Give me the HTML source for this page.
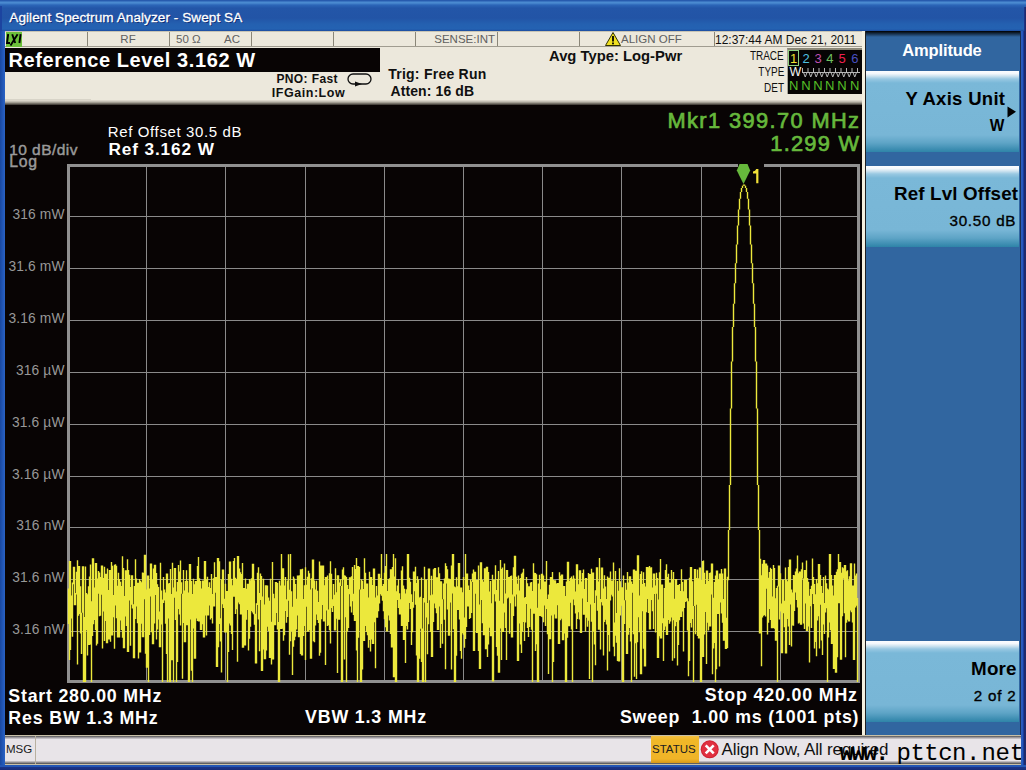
<!DOCTYPE html>
<html><head><meta charset="utf-8"><style>
html,body{margin:0;padding:0;}
body{width:1026px;height:770px;overflow:hidden;position:relative;background:#2358b0;font-family:"Liberation Sans",sans-serif;}
</style></head><body>
<div style="position:absolute;left:0;top:0;width:1026px;height:31px;background:linear-gradient(#2457aa 0px,#2a5fb2 1px,#4a8ad0 2px,#4a8ad0 3px,#2c66b8 5px,#2356a8 8px,#2254a6 18px,#2460b0 24px,#2462b2 29px,#1c4ca0 31px);"></div><div style='position:absolute;top:11.28px;font-size:13.6px;line-height:13.6px;font-weight:normal;color:#fff;white-space:pre;font-family:"Liberation Sans", sans-serif;letter-spacing:0.05px;left:9.3px;text-shadow:1px 1px 0 #0a2a70;-webkit-text-stroke:0.3px #fff;'>Agilent Spectrum Analyzer - Swept SA</div>
<div style="position:absolute;left:1023.5px;top:7px;width:2.5px;height:24px;background:linear-gradient(90deg,#1c3ca0,#1f2a6c 1px);"></div><div style="position:absolute;left:0;top:6px;width:2px;height:25px;background:#1c44a0;"></div><div style="position:absolute;left:0;top:31px;width:5px;height:739px;background:linear-gradient(90deg,#1a48a0,#2258b8 3px,#2a62c4 5px);"></div><div style="position:absolute;left:1021px;top:31px;width:5px;height:739px;background:linear-gradient(90deg,#2a5cc0 0px,#2656b8 2px,#183c9c 2px,#183c9c 3px,#1f2a6c 3.3px,#1f2a6c 5px);"></div><div style="position:absolute;left:0;top:765px;width:1026px;height:5px;background:linear-gradient(#2456b4 0px,#2456b4 2px,#1a3488 2.5px,#182c78 5px);"></div><div style="position:absolute;left:5px;top:31px;width:860px;height:74px;background:#ece8dc;"></div><div style="position:absolute;left:5px;top:31px;width:857px;height:1px;background:#c8c4b4;"></div><div style="position:absolute;left:5px;top:46px;width:857px;height:1px;background:#a09c90;"></div><div style="position:absolute;left:87px;top:32px;width:1px;height:14px;background:#8a8678;"></div><div style="position:absolute;left:169px;top:32px;width:1px;height:14px;background:#8a8678;"></div><div style="position:absolute;left:251px;top:32px;width:1px;height:14px;background:#8a8678;"></div><div style="position:absolute;left:333px;top:32px;width:1px;height:14px;background:#8a8678;"></div><div style="position:absolute;left:415px;top:32px;width:1px;height:14px;background:#8a8678;"></div><div style="position:absolute;left:497px;top:32px;width:1px;height:14px;background:#8a8678;"></div><div style="position:absolute;left:579px;top:32px;width:1px;height:14px;background:#8a8678;"></div><div style="position:absolute;left:714px;top:32px;width:1px;height:14px;background:#8a8678;"></div><div style="position:absolute;left:6px;top:32px;width:16px;height:15px;background:#6cc03a;"></div><svg style="position:absolute;left:0;top:0" width="30" height="50"><path d="M8.2 34 L7 43 H10 M12.2 34.2 L15.2 43 M17.6 34.2 L10.5 45.4 M20.6 34.2 L19.4 43" fill="none" stroke="#000" stroke-width="1.9"/></svg><div style='position:absolute;top:33.76px;font-size:11.5px;line-height:11.5px;font-weight:normal;color:#606060;white-space:pre;font-family:"Liberation Sans", sans-serif;left:-72px;width:400px;text-align:center;'>RF</div>
<div style='position:absolute;top:33.76px;font-size:11.5px;line-height:11.5px;font-weight:normal;color:#606060;white-space:pre;font-family:"Liberation Sans", sans-serif;left:176px;'>50 Ω</div>
<div style='position:absolute;top:33.76px;font-size:11.5px;line-height:11.5px;font-weight:normal;color:#606060;white-space:pre;font-family:"Liberation Sans", sans-serif;left:224px;'>AC</div>
<div style='position:absolute;top:33.76px;font-size:11.5px;line-height:11.5px;font-weight:normal;color:#606060;white-space:pre;font-family:"Liberation Sans", sans-serif;right:531.00px;'>SENSE:INT</div>
<svg style="position:absolute;left:605px;top:32px" width="16" height="14" viewBox="0 0 16 14"><path d="M8 0.5 L15.5 13.5 L0.5 13.5 Z" fill="#f0e020" stroke="#303000" stroke-width="1"/><rect x="7.1" y="4" width="1.8" height="5.5" fill="#000"/><rect x="7.1" y="10.5" width="1.8" height="1.8" fill="#000"/></svg><div style='position:absolute;top:33.76px;font-size:11.5px;line-height:11.5px;font-weight:normal;color:#606060;white-space:pre;font-family:"Liberation Sans", sans-serif;left:621px;'>ALIGN OFF</div>
<div style='position:absolute;top:33.84px;font-size:12px;line-height:12px;font-weight:normal;color:#101010;white-space:pre;font-family:"Liberation Sans", sans-serif;left:715px;'>12:37:44 AM Dec 21, 2011</div>
<div style="position:absolute;left:5px;top:48px;width:375px;height:23.6px;background:#080404;"></div><div style='position:absolute;top:50.07px;font-size:20px;line-height:20px;font-weight:bold;color:#fff;white-space:pre;font-family:"Liberation Sans", sans-serif;letter-spacing:0.6px;left:8.5px;'>Reference Level 3.162 W</div>
<div style='position:absolute;top:73.24px;font-size:12px;line-height:12px;font-weight:bold;color:#101010;white-space:pre;font-family:"Liberation Sans", sans-serif;letter-spacing:0.4px;left:276.4px;'>PNO: Fast</div>
<div style='position:absolute;top:87.42px;font-size:12.5px;line-height:12.5px;font-weight:bold;color:#101010;white-space:pre;font-family:"Liberation Sans", sans-serif;letter-spacing:0.55px;left:271.7px;'>IFGain:Low</div>
<svg style="position:absolute;left:347px;top:73px" width="26" height="14" viewBox="0 0 26 14"><rect x="1" y="1" width="23" height="10" rx="5" ry="5" fill="none" stroke="#101010" stroke-width="1.3"/><path d="M8 8.5 L15 11 L8 13.5 Z" fill="#101010"/></svg><div style='position:absolute;top:66.85px;font-size:14px;line-height:14px;font-weight:bold;color:#101010;white-space:pre;font-family:"Liberation Sans", sans-serif;letter-spacing:0.25px;left:388.2px;'>Trig: Free Run</div>
<div style='position:absolute;top:84.45px;font-size:14px;line-height:14px;font-weight:bold;color:#101010;white-space:pre;font-family:"Liberation Sans", sans-serif;letter-spacing:0.1px;left:390.5px;'>Atten: 16 dB</div>
<div style='position:absolute;top:49.27px;font-size:14.8px;line-height:14.8px;font-weight:bold;color:#101010;white-space:pre;font-family:"Liberation Sans", sans-serif;left:549px;'>Avg Type: Log-Pwr</div>
<div style='position:absolute;top:50.34px;font-size:12px;line-height:12px;font-weight:normal;color:#101010;white-space:pre;font-family:"Liberation Sans", sans-serif;right:242.00px;transform:scaleX(0.83);transform-origin:100% 50%;'>TRACE</div>
<div style='position:absolute;top:66.04px;font-size:12px;line-height:12px;font-weight:normal;color:#101010;white-space:pre;font-family:"Liberation Sans", sans-serif;right:242.00px;transform:scaleX(0.83);transform-origin:100% 50%;'>TYPE</div>
<div style='position:absolute;top:81.54px;font-size:12px;line-height:12px;font-weight:normal;color:#101010;white-space:pre;font-family:"Liberation Sans", sans-serif;right:242.00px;transform:scaleX(0.83);transform-origin:100% 50%;'>DET</div>
<div style="position:absolute;left:787px;top:47.5px;width:75px;height:46.5px;background:#060404;border-top:2.5px solid #8c8878;border-left:1.5px solid #a8a498;box-sizing:border-box;"></div><div style='position:absolute;top:51.99px;font-size:13px;line-height:13px;font-weight:normal;color:#f0e030;white-space:pre;font-family:"Liberation Sans", sans-serif;left:593.6px;width:400px;text-align:center;'>1</div>
<div style='position:absolute;top:51.99px;font-size:13px;line-height:13px;font-weight:normal;color:#50c0e0;white-space:pre;font-family:"Liberation Sans", sans-serif;left:606px;width:400px;text-align:center;'>2</div>
<div style='position:absolute;top:51.99px;font-size:13px;line-height:13px;font-weight:normal;color:#c050b0;white-space:pre;font-family:"Liberation Sans", sans-serif;left:618px;width:400px;text-align:center;'>3</div>
<div style='position:absolute;top:51.99px;font-size:13px;line-height:13px;font-weight:normal;color:#70c060;white-space:pre;font-family:"Liberation Sans", sans-serif;left:629.8px;width:400px;text-align:center;'>4</div>
<div style='position:absolute;top:51.99px;font-size:13px;line-height:13px;font-weight:normal;color:#f02050;white-space:pre;font-family:"Liberation Sans", sans-serif;left:642px;width:400px;text-align:center;'>5</div>
<div style='position:absolute;top:51.99px;font-size:13px;line-height:13px;font-weight:normal;color:#4850c0;white-space:pre;font-family:"Liberation Sans", sans-serif;left:654.8px;width:400px;text-align:center;'>6</div>
<div style="position:absolute;left:788px;top:50px;width:11px;height:16px;border:1px solid #90d080;box-sizing:border-box;"></div><div style='position:absolute;top:66.42px;font-size:12.5px;line-height:12.5px;font-weight:normal;color:#f4f4f4;white-space:pre;font-family:"Liberation Sans", sans-serif;left:789.5px;'>W</div>
<svg style="position:absolute;left:0;top:0" width="1026" height="100"><path d="M802 72.5 H860 M802.5 72.5 V68 M803.5 72.5 L805.25 77 L807.0 72.5 M808.0 72.5 V68 M809.0 72.5 L810.75 77 L812.5 72.5 M813.5 72.5 V68 M814.5 72.5 L816.25 77 L818.0 72.5 M819.0 72.5 V68 M820.0 72.5 L821.75 77 L823.5 72.5 M824.5 72.5 V68 M825.5 72.5 L827.25 77 L829.0 72.5 M830.0 72.5 V68 M831.0 72.5 L832.75 77 L834.5 72.5 M835.5 72.5 V68 M836.5 72.5 L838.25 77 L840.0 72.5 M841.0 72.5 V68 M842.0 72.5 L843.75 77 L845.5 72.5 M846.5 72.5 V68 M847.5 72.5 L849.25 77 L851.0 72.5 M852.0 72.5 V68 M853.0 72.5 L854.75 77 L856.5 72.5 M857.5 72.5 V68" fill="none" stroke="#b8b8b8" stroke-width="1"/></svg><div style='position:absolute;top:79.29px;font-size:13px;line-height:13px;font-weight:normal;color:#58c028;white-space:pre;font-family:"Liberation Sans", sans-serif;left:593.6px;width:400px;text-align:center;'>N</div>
<div style='position:absolute;top:79.29px;font-size:13px;line-height:13px;font-weight:normal;color:#58c028;white-space:pre;font-family:"Liberation Sans", sans-serif;left:606px;width:400px;text-align:center;'>N</div>
<div style='position:absolute;top:79.29px;font-size:13px;line-height:13px;font-weight:normal;color:#58c028;white-space:pre;font-family:"Liberation Sans", sans-serif;left:618px;width:400px;text-align:center;'>N</div>
<div style='position:absolute;top:79.29px;font-size:13px;line-height:13px;font-weight:normal;color:#58c028;white-space:pre;font-family:"Liberation Sans", sans-serif;left:629.8px;width:400px;text-align:center;'>N</div>
<div style='position:absolute;top:79.29px;font-size:13px;line-height:13px;font-weight:normal;color:#58c028;white-space:pre;font-family:"Liberation Sans", sans-serif;left:642px;width:400px;text-align:center;'>N</div>
<div style='position:absolute;top:79.29px;font-size:13px;line-height:13px;font-weight:normal;color:#58c028;white-space:pre;font-family:"Liberation Sans", sans-serif;left:654.8px;width:400px;text-align:center;'>N</div>
<div style="position:absolute;left:5px;top:99px;width:86px;height:3px;background:#d8d4c8;"></div><div style="position:absolute;left:5px;top:100px;width:857px;height:6px;background:linear-gradient(#e4e0d4,#b8b4a8 2px,#605c54 4px,#080404 6px);"></div><div style="position:absolute;left:5px;top:105px;width:857px;height:630px;background:#080404;"></div><div style="position:absolute;left:862px;top:31px;width:3px;height:704px;background:#f4f0e0;"></div><div style="position:absolute;left:865px;top:31px;width:1px;height:704px;background:#202020;"></div><div style='position:absolute;top:123.90px;font-size:15px;line-height:15px;font-weight:normal;color:#fff;white-space:pre;font-family:"Liberation Sans", sans-serif;letter-spacing:0.62px;left:107.8px;'>Ref Offset 30.5 dB</div>
<div style='position:absolute;top:140.64px;font-size:17.2px;line-height:17.2px;font-weight:bold;color:#fff;white-space:pre;font-family:"Liberation Sans", sans-serif;letter-spacing:0.9px;left:108.4px;'>Ref 3.162 W</div>
<div style='position:absolute;top:142.28px;font-size:15.5px;line-height:15.5px;font-weight:normal;color:#9a9a9a;white-space:pre;font-family:"Liberation Sans", sans-serif;letter-spacing:0.45px;left:9.2px;-webkit-text-stroke:0.45px #9a9a9a;'>10 dB/div</div>
<div style='position:absolute;top:154.22px;font-size:15.8px;line-height:15.8px;font-weight:normal;color:#9a9a9a;white-space:pre;font-family:"Liberation Sans", sans-serif;letter-spacing:0.8px;left:9.2px;-webkit-text-stroke:0.45px #9a9a9a;'>Log</div>
<div style='position:absolute;top:110.04px;font-size:21.8px;line-height:21.8px;font-weight:normal;color:#66b83c;white-space:pre;font-family:"Liberation Sans", sans-serif;letter-spacing:1.4px;right:165.60px;-webkit-text-stroke:0.7px #66b83c;'>Mkr1 399.70 MHz</div>
<div style='position:absolute;top:132.54px;font-size:21.8px;line-height:21.8px;font-weight:normal;color:#66b83c;white-space:pre;font-family:"Liberation Sans", sans-serif;letter-spacing:1.25px;right:165.75px;-webkit-text-stroke:0.7px #66b83c;'>1.299 W</div>
<svg style="position:absolute;left:0;top:0" width="1026" height="770"><line x1="146.5" y1="167" x2="146.5" y2="680" stroke="#8a8a8a" stroke-width="1"/><line x1="225.5" y1="167" x2="225.5" y2="680" stroke="#8a8a8a" stroke-width="1"/><line x1="305.5" y1="167" x2="305.5" y2="680" stroke="#8a8a8a" stroke-width="1"/><line x1="384.5" y1="167" x2="384.5" y2="680" stroke="#8a8a8a" stroke-width="1"/><line x1="463.5" y1="167" x2="463.5" y2="680" stroke="#8a8a8a" stroke-width="1"/><line x1="542.5" y1="167" x2="542.5" y2="680" stroke="#8a8a8a" stroke-width="1"/><line x1="621.5" y1="167" x2="621.5" y2="680" stroke="#8a8a8a" stroke-width="1"/><line x1="701.5" y1="167" x2="701.5" y2="680" stroke="#8a8a8a" stroke-width="1"/><line x1="780.5" y1="167" x2="780.5" y2="680" stroke="#8a8a8a" stroke-width="1"/><line x1="70" y1="216.5" x2="857" y2="216.5" stroke="#8a8a8a" stroke-width="1"/><line x1="70" y1="268.5" x2="857" y2="268.5" stroke="#8a8a8a" stroke-width="1"/><line x1="70" y1="320.5" x2="857" y2="320.5" stroke="#8a8a8a" stroke-width="1"/><line x1="70" y1="372.5" x2="857" y2="372.5" stroke="#8a8a8a" stroke-width="1"/><line x1="70" y1="424.5" x2="857" y2="424.5" stroke="#8a8a8a" stroke-width="1"/><line x1="70" y1="476.5" x2="857" y2="476.5" stroke="#8a8a8a" stroke-width="1"/><line x1="70" y1="527.5" x2="857" y2="527.5" stroke="#8a8a8a" stroke-width="1"/><line x1="70" y1="579.5" x2="857" y2="579.5" stroke="#8a8a8a" stroke-width="1"/><line x1="70" y1="631.5" x2="857" y2="631.5" stroke="#8a8a8a" stroke-width="1"/><path d="M68.5 165.5 H738 M764 165.5 H858.5 V681.5 H68.5 V164" fill="none" stroke="#909090" stroke-width="3"/><path d="M68.5 588.4V624.0M69.5 561.1V660.1M70.5 561.1V650.1M71.5 595.6V618.6M72.5 582.4V636.8M73.5 566.8V584.2M74.5 566.8V605.3M75.5 593.0V605.3M76.5 571.8V594.4M77.5 560.2V664.6M78.5 565.9V615.8M79.5 565.9V614.1M80.5 586.2V633.6M81.5 612.7V654.1M82.5 566.2V612.7M83.5 566.2V682.0M84.5 617.0V682.0M85.5 566.6V682.0M86.5 593.1V630.3M87.5 594.2V655.5M88.5 586.3V645.1M89.5 576.4V645.1M90.5 564.6V644.4M91.5 601.3V682.0M92.5 558.3V636.1M93.5 558.3V624.2M94.5 587.5V619.9M95.5 563.1V630.0M96.5 563.1V645.6M97.5 578.5V643.8M98.5 571.0V593.8M99.5 572.6V616.2M100.5 577.1V615.8M101.5 565.6V594.7M102.5 565.6V648.6M103.5 577.9V611.5M104.5 566.8V641.1M105.5 573.7V620.9M106.5 573.8V643.2M107.5 568.4V643.2M108.5 589.9V639.6M109.5 569.9V639.6M110.5 569.9V641.8M111.5 562.0V635.6M112.5 565.8V635.6M113.5 595.1V617.3M114.5 564.7V648.8M115.5 564.3V605.6M116.5 565.7V618.3M117.5 585.8V637.4M118.5 572.7V637.6M119.5 578.9V637.6M120.5 581.8V620.6M121.5 585.9V629.9M122.5 556.2V637.7M123.5 568.1V648.2M124.5 595.9V648.2M125.5 570.2V616.4M126.5 570.2V625.9M127.5 559.3V652.0M128.5 569.9V652.0M129.5 574.7V600.4M130.5 587.0V645.8M131.5 575.3V604.8M132.5 575.3V608.6M133.5 604.3V658.2M134.5 585.9V658.2M135.5 559.3V619.0M136.5 578.4V606.5M137.5 582.8V623.2M138.5 582.8V658.6M139.5 579.1V652.5M140.5 580.8V652.5M141.5 582.3V623.7M142.5 572.6V637.3M143.5 572.7V637.3M144.5 554.8V599.3M145.5 554.8V653.7M146.5 589.4V667.8M147.5 575.4V667.8M148.5 575.4V682.0M149.5 588.6V635.1M150.5 563.6V596.4M151.5 563.6V632.3M152.5 579.6V644.2M153.5 568.4V644.2M154.5 564.8V623.4M155.5 564.8V595.0M156.5 572.9V639.5M157.5 584.2V629.4M158.5 586.9V619.5M159.5 611.4V647.2M160.5 562.7V647.2M161.5 590.5V624.5M162.5 599.4V682.0M163.5 577.1V603.1M164.5 589.5V600.4M165.5 592.6V623.7M166.5 573.5V653.9M167.5 573.5V682.0M168.5 583.6V618.4M169.5 583.0V682.0M170.5 569.1V682.0M171.5 593.9V660.2M172.5 562.8V660.2M173.5 587.6V682.0M174.5 567.9V597.8M175.5 567.9V620.0M176.5 591.5V682.0M177.5 581.9V661.9M178.5 564.9V608.9M179.5 571.4V614.6M180.5 560.4V625.6M181.5 582.3V593.8M182.5 593.8V678.7M183.5 570.1V623.0M184.5 590.6V642.2M185.5 581.0V642.2M186.5 570.3V625.3M187.5 580.8V625.3M188.5 592.6V682.0M189.5 564.0V682.0M190.5 564.0V619.5M191.5 581.0V670.8M192.5 594.1V682.0M193.5 578.8V628.4M194.5 584.2V658.7M195.5 581.1V658.7M196.5 580.9V618.4M197.5 565.9V621.0M198.5 556.9V621.4M199.5 578.2V621.4M200.5 581.0V630.1M201.5 588.5V630.1M202.5 580.5V624.3M203.5 580.5V637.4M204.5 560.9V637.4M205.5 560.9V615.4M206.5 579.5V635.5M207.5 576.7V615.5M208.5 587.0V615.5M209.5 582.3V605.4M210.5 588.0V619.4M211.5 574.1V618.1M212.5 594.0V623.6M213.5 578.2V606.6M214.5 562.3V606.6M215.5 577.1V592.7M216.5 577.1V667.1M217.5 557.9V667.1M218.5 557.9V647.2M219.5 561.2V624.1M220.5 618.3V641.5M221.5 579.4V672.6M222.5 569.6V604.2M223.5 569.6V607.9M224.5 598.8V632.6M225.5 583.7V632.5M226.5 590.9V632.5M227.5 590.9V682.0M228.5 573.9V652.0M229.5 561.6V623.4M230.5 561.6V625.5M231.5 578.7V634.0M232.5 585.2V650.1M233.5 561.1V596.8M234.5 558.0V596.8M235.5 577.8V614.0M236.5 579.0V609.3M237.5 556.0V661.8M238.5 556.0V602.4M239.5 568.6V604.2M240.5 572.3V614.6M241.5 574.0V614.6M242.5 562.9V647.7M243.5 588.0V647.7M244.5 588.0V645.4M245.5 578.4V645.4M246.5 588.7V619.8M247.5 583.7V610.1M248.5 583.7V650.4M249.5 579.1V638.8M250.5 580.2V626.7M251.5 578.2V611.1M252.5 563.7V612.4M253.5 563.7V614.2M254.5 580.2V624.7M255.5 613.8V663.6M256.5 603.3V663.6M257.5 572.8V605.1M258.5 567.3V619.4M259.5 593.1V651.3M260.5 573.6V599.9M261.5 575.9V670.9M262.5 596.6V670.9M263.5 578.7V649.5M264.5 604.6V659.2M265.5 585.2V659.2M266.5 585.2V650.4M267.5 585.5V626.7M268.5 597.6V631.0M269.5 600.8V657.9M270.5 578.7V657.9M271.5 621.7V664.6M272.5 562.1V659.6M273.5 593.7V659.6M274.5 598.3V625.3M275.5 582.1V625.3M276.5 582.1V612.9M277.5 583.0V629.6M278.5 622.0V682.0M279.5 580.7V682.0M280.5 585.4V628.9M281.5 554.0V628.9M282.5 568.3V628.8M283.5 568.3V640.8M284.5 585.6V635.2M285.5 577.0V610.9M286.5 599.2V622.7M287.5 580.6V617.0M288.5 554.3V600.7M289.5 589.7V654.7M290.5 554.0V641.3M291.5 591.3V631.4M292.5 606.7V675.1M293.5 576.5V646.7M294.5 578.4V640.2M295.5 583.9V636.8M296.5 598.7V629.6M297.5 575.6V615.4M298.5 575.6V637.2M299.5 575.3V637.2M300.5 569.2V654.1M301.5 569.2V655.5M302.5 568.8V655.5M303.5 598.9V636.0M304.5 585.2V626.0M305.5 567.2V660.0M306.5 584.7V606.8M307.5 576.7V631.7M308.5 570.7V631.7M309.5 573.2V630.2M310.5 589.6V658.7M311.5 578.3V658.7M312.5 559.6V588.2M313.5 559.6V641.2M314.5 580.4V642.3M315.5 589.6V625.6M316.5 580.8V614.5M317.5 590.7V620.0M318.5 602.0V623.0M319.5 561.6V655.7M320.5 565.4V652.8M321.5 565.4V619.2M322.5 565.4V605.1M323.5 565.4V621.6M324.5 585.3V621.6M325.5 576.9V664.9M326.5 576.9V610.6M327.5 575.4V625.9M328.5 609.5V625.3M329.5 573.2V630.3M330.5 561.3V643.6M331.5 573.8V607.9M332.5 599.3V612.0M333.5 584.0V606.0M334.5 594.7V630.5M335.5 568.2V630.5M336.5 592.3V618.8M337.5 575.2V673.0M338.5 575.2V619.8M339.5 582.4V619.8M340.5 579.2V586.1M341.5 586.1V682.0M342.5 569.6V682.0M343.5 567.2V579.3M344.5 575.2V659.5M345.5 575.7V617.2M346.5 577.1V682.0M347.5 584.9V631.6M348.5 589.0V628.1M349.5 577.2V594.2M350.5 577.2V606.6M351.5 576.3V612.4M352.5 566.9V601.3M353.5 593.8V615.0M354.5 564.9V620.9M355.5 569.0V620.9M356.5 557.9V650.5M357.5 566.0V682.0M358.5 566.0V637.7M359.5 567.0V589.6M360.5 589.6V682.0M361.5 579.4V682.0M362.5 580.7V669.6M363.5 588.9V640.9M364.5 558.3V640.9M365.5 572.7V626.0M366.5 583.6V631.9M367.5 583.6V635.2M368.5 597.6V647.8M369.5 571.7V639.9M370.5 577.0V651.5M371.5 577.0V639.4M372.5 584.9V643.9M373.5 568.6V643.9M374.5 568.6V622.3M375.5 597.6V668.2M376.5 586.0V617.7M377.5 595.4V617.7M378.5 573.7V611.3M379.5 573.7V603.6M380.5 578.0V594.3M381.5 554.0V595.8M382.5 586.0V600.8M383.5 584.1V611.3M384.5 572.7V619.3M385.5 566.1V627.3M386.5 554.0V631.4M387.5 591.1V631.4M388.5 579.3V615.4M389.5 578.2V620.4M390.5 569.2V634.0M391.5 569.2V647.5M392.5 567.1V647.5M393.5 554.1V677.3M394.5 576.4V677.3M395.5 558.2V682.0M396.5 591.2V682.0M397.5 585.5V599.9M398.5 579.2V608.1M399.5 593.3V614.6M400.5 599.2V614.6M401.5 570.5V626.0M402.5 566.3V626.0M403.5 585.6V639.9M404.5 588.7V639.9M405.5 593.4V662.9M406.5 589.2V625.9M407.5 554.0V629.5M408.5 554.0V622.1M409.5 577.7V602.9M410.5 581.8V608.9M411.5 594.2V645.1M412.5 602.1V632.2M413.5 571.6V607.8M414.5 571.6V591.2M415.5 566.7V604.7M416.5 582.9V655.4M417.5 576.3V682.0M418.5 579.4V682.0M419.5 597.6V658.8M420.5 596.8V628.7M421.5 577.5V661.9M422.5 628.6V682.0M423.5 597.9V682.0M424.5 566.8V602.6M425.5 579.4V682.0M426.5 579.4V617.6M427.5 602.9V654.3M428.5 568.6V624.2M429.5 568.6V600.3M430.5 595.3V631.9M431.5 575.8V657.0M432.5 594.5V657.0M433.5 569.2V621.9M434.5 567.9V603.4M435.5 567.9V608.2M436.5 577.3V613.3M437.5 577.3V629.9M438.5 567.2V629.9M439.5 573.2V606.4M440.5 581.2V648.1M441.5 581.2V624.1M442.5 599.3V643.8M443.5 583.6V599.3M444.5 578.4V619.7M445.5 563.3V669.2M446.5 565.9V583.6M447.5 569.3V609.5M448.5 578.5V635.7M449.5 578.8V635.7M450.5 579.2V602.6M451.5 565.4V669.5M452.5 554.0V593.5M453.5 554.0V629.2M454.5 586.6V682.0M455.5 587.3V682.0M456.5 577.3V655.8M457.5 586.3V610.0M458.5 563.1V610.0M459.5 563.1V619.5M460.5 587.4V651.1M461.5 587.4V658.7M462.5 592.2V633.3M463.5 577.1V634.8M464.5 617.5V647.8M465.5 554.1V639.0M466.5 573.4V627.0M467.5 573.4V606.4M468.5 585.5V606.4M469.5 590.1V618.9M470.5 579.4V618.0M471.5 581.5V613.0M472.5 573.6V582.0M473.5 569.5V650.9M474.5 571.7V650.9M475.5 571.7V593.8M476.5 580.0V633.0M477.5 580.0V632.9M478.5 565.5V651.1M479.5 604.5V669.1M480.5 562.3V669.1M481.5 562.3V599.9M482.5 580.0V623.3M483.5 581.7V635.3M484.5 568.2V635.3M485.5 568.2V649.2M486.5 566.8V649.2M487.5 566.8V657.1M488.5 572.0V644.4M489.5 591.4V627.7M490.5 580.9V636.3M491.5 603.2V636.3M492.5 574.8V681.6M493.5 579.7V681.6M494.5 579.7V594.2M495.5 565.2V601.4M496.5 590.0V647.0M497.5 579.0V655.8M498.5 571.0V672.8M499.5 600.8V672.8M500.5 559.9V628.5M501.5 568.9V660.0M502.5 567.4V632.0M503.5 603.6V632.0M504.5 563.6V612.5M505.5 593.6V628.0M506.5 570.1V660.1M507.5 570.1V598.6M508.5 577.1V597.5M509.5 577.1V633.7M510.5 576.1V603.3M511.5 575.4V637.5M512.5 594.5V637.5M513.5 567.3V615.9M514.5 555.8V596.4M515.5 555.8V606.4M516.5 576.7V594.6M517.5 583.8V661.0M518.5 575.6V661.0M519.5 590.4V623.6M520.5 577.9V644.6M521.5 573.7V653.0M522.5 572.5V631.7M523.5 568.7V622.1M524.5 597.8V640.9M525.5 597.0V622.5M526.5 576.9V603.9M527.5 583.2V628.0M528.5 586.3V637.1M529.5 586.3V626.9M530.5 582.5V608.8M531.5 581.9V629.7M532.5 591.0V682.0M533.5 563.3V613.7M534.5 572.7V613.7M535.5 573.1V651.0M536.5 574.3V644.2M537.5 607.7V682.0M538.5 583.5V682.0M539.5 574.8V615.9M540.5 589.3V615.9M541.5 573.7V616.7M542.5 573.7V617.2M543.5 575.4V622.2M544.5 581.6V605.5M545.5 581.6V626.1M546.5 561.1V608.9M547.5 599.1V634.2M548.5 594.6V674.1M549.5 584.7V639.2M550.5 577.0V639.2M551.5 577.0V615.6M552.5 571.9V682.0M553.5 579.9V661.9M554.5 580.2V614.6M555.5 580.2V618.4M556.5 583.4V618.4M557.5 583.1V605.2M558.5 583.1V643.9M559.5 572.3V643.9M560.5 575.7V620.2M561.5 574.6V618.8M562.5 574.6V640.2M563.5 585.9V640.2M564.5 585.9V633.6M565.5 596.0V682.0M566.5 581.4V682.0M567.5 561.7V637.7M568.5 561.7V626.3M569.5 580.7V626.3M570.5 577.9V602.7M571.5 576.6V629.6M572.5 578.7V682.0M573.5 575.4V599.5M574.5 578.6V605.3M575.5 591.5V613.5M576.5 564.2V629.0M577.5 564.2V619.0M578.5 584.3V612.2M579.5 570.2V619.5M580.5 570.2V633.0M581.5 581.5V633.0M582.5 573.1V598.6M583.5 569.6V614.8M584.5 589.1V614.8M585.5 578.0V631.6M586.5 578.0V617.7M587.5 602.1V626.7M588.5 573.0V620.8M589.5 574.0V678.9M590.5 574.0V604.6M591.5 568.8V621.8M592.5 572.6V682.0M593.5 572.6V631.5M594.5 603.0V644.4M595.5 590.3V665.3M596.5 567.2V595.7M597.5 567.2V610.7M598.5 581.5V629.7M599.5 558.1V629.7M600.5 599.0V649.6M601.5 567.4V602.2M602.5 567.4V605.4M603.5 588.5V655.5M604.5 575.2V622.0M605.5 586.4V619.7M606.5 599.1V624.4M607.5 576.5V670.6M608.5 577.8V635.0M609.5 577.8V651.6M610.5 571.5V600.5M611.5 580.5V594.7M612.5 580.5V596.4M613.5 562.4V646.7M614.5 622.6V656.2M615.5 570.9V635.7M616.5 613.0V642.8M617.5 581.1V661.0M618.5 590.7V661.5M619.5 568.3V661.5M620.5 581.3V615.5M621.5 587.2V605.7M622.5 587.2V682.0M623.5 575.5V682.0M624.5 600.2V624.0M625.5 582.8V600.2M626.5 589.8V653.9M627.5 572.1V653.9M628.5 582.5V634.8M629.5 576.2V627.9M630.5 576.2V641.5M631.5 581.5V682.0M632.5 584.0V592.7M633.5 569.6V634.2M634.5 569.6V676.7M635.5 570.7V643.2M636.5 570.7V678.9M637.5 555.2V642.3M638.5 555.2V617.2M639.5 595.4V632.3M640.5 574.0V674.3M641.5 571.2V674.3M642.5 584.0V611.2M643.5 572.2V648.7M644.5 583.0V666.5M645.5 586.5V666.5M646.5 567.0V612.2M647.5 567.0V599.0M648.5 567.2V612.9M649.5 566.0V629.4M650.5 567.6V629.4M651.5 567.3V600.1M652.5 587.6V611.3M653.5 573.5V628.9M654.5 573.5V593.9M655.5 585.4V632.4M656.5 572.7V593.7M657.5 578.0V657.9M658.5 599.5V657.9M659.5 572.3V636.3M660.5 559.0V638.6M661.5 584.5V638.6M662.5 584.5V623.2M663.5 618.3V661.1M664.5 588.0V629.9M665.5 570.1V626.6M666.5 564.2V635.1M667.5 577.1V635.1M668.5 573.7V620.0M669.5 582.4V623.7M670.5 582.4V621.5M671.5 569.9V617.6M672.5 579.1V660.7M673.5 571.9V620.3M674.5 598.7V658.2M675.5 579.0V626.3M676.5 579.0V621.9M677.5 585.0V665.5M678.5 585.0V644.9M679.5 584.0V620.3M680.5 590.9V617.0M681.5 569.2V617.0M682.5 582.0V611.5M683.5 591.3V651.5M684.5 579.8V608.1M685.5 579.8V601.9M686.5 579.8V601.3M687.5 598.3V630.6M688.5 601.3V676.3M689.5 577.7V661.1M690.5 566.9V622.9M691.5 566.9V627.4M692.5 581.3V618.9M693.5 605.9V682.0M694.5 569.1V605.9M695.5 569.1V634.2M696.5 578.0V604.7M697.5 569.5V636.1M698.5 578.2V638.5M699.5 567.4V638.5M700.5 567.4V682.0M701.5 579.8V682.0M702.5 561.1V656.9M703.5 560.4V656.9M704.5 572.7V634.4M705.5 584.0V611.9M706.5 570.6V664.1M707.5 570.6V622.7M708.5 580.9V630.5M709.5 573.0V626.4M710.5 572.4V626.4M711.5 563.5V594.6M712.5 563.5V674.3M713.5 597.8V648.6M714.5 582.0V642.9M715.5 575.5V682.0M716.5 570.5V669.3M717.5 570.5V613.9M718.5 579.2V613.9M719.5 573.6V666.6M720.5 573.6V602.4M721.5 568.9V613.5M722.5 573.6V622.8M723.5 599.1V640.8M724.5 568.6V640.8M725.5 568.6V648.9M726.5 617.8V648.9M727.5 576.7V648.0M728.5 530.0V580.2M729.5 485.0V530.0M730.5 408.4V485.0M731.5 361.6V408.4M732.5 326.9V361.6M733.5 303.7V326.9M734.5 283.3V303.7M735.5 263.3V283.3M736.5 244.4V263.3M737.5 225.5V244.4M738.5 209.5V225.5M739.5 198.8V209.5M740.5 192.0V198.8M741.5 188.0V192.0M742.5 185.8V188.0M743.5 184.5V185.8M744.5 184.5V185.8M745.5 185.8V188.0M746.5 188.0V192.0M747.5 192.0V198.8M748.5 198.8V209.5M749.5 209.5V225.5M750.5 225.5V244.4M751.5 244.4V263.3M752.5 263.3V283.3M753.5 283.3V303.7M754.5 303.7V326.9M755.5 326.9V361.6M756.5 361.6V408.4M757.5 408.4V485.0M758.5 485.0V530.0M759.5 530.0V633.5M760.5 558.8V633.5M761.5 575.2V666.3M762.5 563.7V617.5M763.5 560.0V615.7M764.5 560.0V614.9M765.5 563.4V616.6M766.5 563.4V588.8M767.5 565.5V634.5M768.5 577.7V622.8M769.5 571.9V609.0M770.5 567.8V620.1M771.5 569.0V628.2M772.5 596.6V628.2M773.5 565.1V628.0M774.5 568.1V628.7M775.5 598.2V640.7M776.5 587.9V640.7M777.5 585.7V682.0M778.5 565.6V586.6M779.5 565.6V619.5M780.5 573.2V611.6M781.5 603.4V653.3M782.5 579.6V653.3M783.5 579.6V613.3M784.5 600.7V627.3M785.5 567.4V653.6M786.5 579.7V653.6M787.5 581.2V618.9M788.5 567.0V626.5M789.5 559.4V645.0M790.5 559.4V604.5M791.5 589.5V646.5M792.5 592.6V625.4M793.5 575.0V625.8M794.5 575.2V610.9M795.5 571.4V592.4M796.5 568.6V599.9M797.5 555.5V607.4M798.5 573.2V623.6M799.5 571.4V622.7M800.5 571.4V624.8M801.5 569.3V624.8M802.5 562.5V578.5M803.5 578.5V623.4M804.5 569.9V629.0M805.5 569.9V603.5M806.5 560.5V630.9M807.5 577.9V630.9M808.5 581.7V626.5M809.5 595.7V662.6M810.5 589.0V606.3M811.5 585.8V628.0M812.5 558.5V593.9M813.5 577.1V604.1M814.5 584.1V648.6M815.5 594.3V642.1M816.5 578.9V656.3M817.5 583.2V620.4M818.5 563.9V616.2M819.5 563.9V648.5M820.5 574.9V604.8M821.5 586.0V640.5M822.5 593.1V655.1M823.5 576.9V624.4M824.5 602.9V634.1M825.5 575.5V612.5M826.5 583.2V608.3M827.5 588.5V682.0M828.5 589.4V637.4M829.5 554.0V622.6M830.5 554.0V630.2M831.5 575.1V644.0M832.5 585.5V644.0M833.5 595.5V669.0M834.5 575.0V669.0M835.5 575.0V672.8M836.5 571.8V672.8M837.5 569.2V657.3M838.5 554.0V603.2M839.5 562.1V603.2M840.5 562.1V659.8M841.5 572.8V659.8M842.5 567.3V616.2M843.5 568.3V578.7M844.5 565.0V613.2M845.5 565.0V657.3M846.5 571.2V622.8M847.5 570.2V619.7M848.5 580.3V621.4M849.5 576.2V621.4M850.5 563.3V610.6M851.5 563.3V612.2M852.5 585.6V622.5M853.5 585.4V660.1M854.5 563.4V660.1M855.5 575.5V607.5M856.5 573.6V605.7M857.5 597.9V682.0" fill="none" stroke="#ece83c" stroke-width="1.4"/><path d="M739.5 164 H747.5 L750.2 170.5 L743.5 184 L736.8 170.5 Z" fill="#66b83c"/><path d="M756.2 169 H758.4 V183.2 H756.2 V173.5 H753 V171.5 Q755.5 171 756.2 169 Z" fill="#f0e038"/></svg><div style='position:absolute;top:208.42px;font-size:13.8px;line-height:13.8px;font-weight:normal;color:#989898;white-space:pre;font-family:"Liberation Sans", sans-serif;letter-spacing:0.15px;right:961.35px;'>316 mW</div>
<div style='position:absolute;top:260.42px;font-size:13.8px;line-height:13.8px;font-weight:normal;color:#989898;white-space:pre;font-family:"Liberation Sans", sans-serif;letter-spacing:0.15px;right:961.35px;'>31.6 mW</div>
<div style='position:absolute;top:312.42px;font-size:13.8px;line-height:13.8px;font-weight:normal;color:#989898;white-space:pre;font-family:"Liberation Sans", sans-serif;letter-spacing:0.15px;right:961.35px;'>3.16 mW</div>
<div style='position:absolute;top:364.42px;font-size:13.8px;line-height:13.8px;font-weight:normal;color:#989898;white-space:pre;font-family:"Liberation Sans", sans-serif;letter-spacing:0.15px;right:961.35px;'>316 µW</div>
<div style='position:absolute;top:416.42px;font-size:13.8px;line-height:13.8px;font-weight:normal;color:#989898;white-space:pre;font-family:"Liberation Sans", sans-serif;letter-spacing:0.15px;right:961.35px;'>31.6 µW</div>
<div style='position:absolute;top:468.42px;font-size:13.8px;line-height:13.8px;font-weight:normal;color:#989898;white-space:pre;font-family:"Liberation Sans", sans-serif;letter-spacing:0.15px;right:961.35px;'>3.16 µW</div>
<div style='position:absolute;top:519.42px;font-size:13.8px;line-height:13.8px;font-weight:normal;color:#989898;white-space:pre;font-family:"Liberation Sans", sans-serif;letter-spacing:0.15px;right:961.35px;'>316 nW</div>
<div style='position:absolute;top:571.42px;font-size:13.8px;line-height:13.8px;font-weight:normal;color:#989898;white-space:pre;font-family:"Liberation Sans", sans-serif;letter-spacing:0.15px;right:961.35px;'>31.6 nW</div>
<div style='position:absolute;top:623.42px;font-size:13.8px;line-height:13.8px;font-weight:normal;color:#989898;white-space:pre;font-family:"Liberation Sans", sans-serif;letter-spacing:0.15px;right:961.35px;'>3.16 nW</div>
<div style='position:absolute;top:687.53px;font-size:17.8px;line-height:17.8px;font-weight:bold;color:#fff;white-space:pre;font-family:"Liberation Sans", sans-serif;letter-spacing:0.78px;left:8.3px;'>Start 280.00 MHz</div>
<div style='position:absolute;top:709.53px;font-size:17.8px;line-height:17.8px;font-weight:bold;color:#fff;white-space:pre;font-family:"Liberation Sans", sans-serif;letter-spacing:0.85px;left:8.3px;'>Res BW 1.3 MHz</div>
<div style='position:absolute;top:709.33px;font-size:17.8px;line-height:17.8px;font-weight:bold;color:#fff;white-space:pre;font-family:"Liberation Sans", sans-serif;letter-spacing:0.85px;left:305px;'>VBW 1.3 MHz</div>
<div style='position:absolute;top:687.13px;font-size:17.8px;line-height:17.8px;font-weight:bold;color:#fff;white-space:pre;font-family:"Liberation Sans", sans-serif;letter-spacing:0.85px;right:168.15px;'>Stop 420.00 MHz</div>
<div style='position:absolute;top:709.33px;font-size:17.8px;line-height:17.8px;font-weight:bold;color:#fff;white-space:pre;font-family:"Liberation Sans", sans-serif;letter-spacing:0.8px;right:166.70px;'>Sweep  1.00 ms (1001 pts)</div>
<div style="position:absolute;left:866px;top:31px;width:155px;height:704px;background:#3166a0;"></div><div style="position:absolute;left:866px;top:31px;width:155px;height:6px;background:linear-gradient(#000,rgba(0,0,0,0));"></div><div style="position:absolute;left:1019.5px;top:31px;width:1.5px;height:704px;background:#1a3050;"></div><div style='position:absolute;top:41.83px;font-size:16.5px;line-height:16.5px;font-weight:bold;color:#fff;white-space:pre;font-family:"Liberation Sans", sans-serif;letter-spacing:-0.15px;left:742px;width:400px;text-align:center;'>Amplitude</div>
<div style="position:absolute;left:866px;top:71px;width:153px;height:81px;background:linear-gradient(#fbfdff 0px,#f4f8fc 2.5px,#cfe4f0 5px,#98c8e2 8px,#7ab8d8 12px,#78b6d6 64px,#5ea4c6 72px,#3e8eb2 78px,#2e84a8 81px);"></div><div style="position:absolute;left:866px;top:166px;width:153px;height:81px;background:linear-gradient(#fbfdff 0px,#f4f8fc 2.5px,#cfe4f0 5px,#98c8e2 8px,#7ab8d8 12px,#78b6d6 64px,#5ea4c6 72px,#3e8eb2 78px,#2e84a8 81px);"></div><div style="position:absolute;left:866px;top:641px;width:153px;height:81px;background:linear-gradient(#fbfdff 0px,#f4f8fc 2.5px,#cfe4f0 5px,#98c8e2 8px,#7ab8d8 12px,#78b6d6 64px,#5ea4c6 72px,#3e8eb2 78px,#2e84a8 81px);"></div><div style='position:absolute;top:90.14px;font-size:18.5px;line-height:18.5px;font-weight:bold;color:#000;white-space:pre;font-family:"Liberation Sans", sans-serif;letter-spacing:0.3px;right:20.70px;'>Y Axis Unit</div>
<svg style="position:absolute;left:1007px;top:106px" width="10" height="12" viewBox="0 0 10 12"><path d="M0.5 0.5 L9 5.8 L0.5 11.5 Z" fill="#000"/></svg><div style='position:absolute;top:116.90px;font-size:16.3px;line-height:16.3px;font-weight:bold;color:#000;white-space:pre;font-family:"Liberation Sans", sans-serif;right:22.00px;transform:scaleX(0.95);transform-origin:100% 50%;'>W</div>
<div style='position:absolute;top:184.88px;font-size:18.8px;line-height:18.8px;font-weight:bold;color:#000;white-space:pre;font-family:"Liberation Sans", sans-serif;letter-spacing:0.15px;right:7.85px;'>Ref Lvl Offset</div>
<div style='position:absolute;top:212.63px;font-size:15.2px;line-height:15.2px;font-weight:normal;color:#000;white-space:pre;font-family:"Liberation Sans", sans-serif;letter-spacing:0.75px;right:9.75px;-webkit-text-stroke:0.35px #000;'>30.50 dB</div>
<div style='position:absolute;top:659.88px;font-size:18.8px;line-height:18.8px;font-weight:bold;color:#000;white-space:pre;font-family:"Liberation Sans", sans-serif;letter-spacing:0.2px;right:9.30px;'>More</div>
<div style='position:absolute;top:687.63px;font-size:15.2px;line-height:15.2px;font-weight:normal;color:#000;white-space:pre;font-family:"Liberation Sans", sans-serif;letter-spacing:0.8px;right:9.40px;-webkit-text-stroke:0.35px #000;'>2 of 2</div>
<div style="position:absolute;left:5px;top:735px;width:1016px;height:30px;background:linear-gradient(#c8c0a8 0px,#c8c0a8 1px,#505050 1px,#9c989c 2.5px,#e8e4e8 4.5px,#e8e4e8 25.5px,#a8a4a8 27px,#484848 29px,#c8c0a8 29px,#c8c0a8 30px);"></div><div style="position:absolute;left:35px;top:736px;width:1px;height:28px;background:#b8b0a0;"></div><div style='position:absolute;top:743.86px;font-size:11.5px;line-height:11.5px;font-weight:normal;color:#181818;white-space:pre;font-family:"Liberation Sans", sans-serif;left:6px;'>MSG</div>
<div style="position:absolute;left:650.5px;top:736px;width:48px;height:27px;background:linear-gradient(#f4c040,#f0b828 4px,#f0b428 23px,#d89818);"></div><div style='position:absolute;top:743.56px;font-size:11.5px;line-height:11.5px;font-weight:normal;color:#202020;white-space:pre;font-family:"Liberation Sans", sans-serif;left:652px;'>STATUS</div>
<svg style="position:absolute;left:700px;top:740px" width="20" height="20" viewBox="0 0 20 20"><circle cx="9.7" cy="9.3" r="9" fill="#d02030"/><circle cx="9.7" cy="9.3" r="8" fill="#e03040"/><path d="M5.7 5.3 L13.7 13.3 M13.7 5.3 L5.7 13.3" stroke="#fff" stroke-width="2.6"/></svg><div style='position:absolute;top:740.91px;font-size:17px;line-height:17px;font-weight:normal;color:#101010;white-space:pre;font-family:"Liberation Sans", sans-serif;letter-spacing:-0.15px;left:721.6px;'>Align Now, All required</div>
<div style="position:absolute;left:5px;top:735px;width:1016px;height:29px;overflow:hidden;"><div style='position:absolute;left:834.5px;top:6.62px;font-family:"Liberation Mono", monospace;font-size:24px;line-height:24px;letter-spacing:-2.6px;white-space:pre;color:#000;font-weight:bold;'>www.</div><div style='position:absolute;left:891.5px;top:6.62px;font-family:"Liberation Mono", monospace;font-size:24px;line-height:24px;letter-spacing:-0.5px;white-space:pre;color:#000;font-weight:normal;'>pttcn.</div><div style='position:absolute;left:976.5px;top:6.62px;font-family:"Liberation Mono", monospace;font-size:24px;line-height:24px;letter-spacing:-0.3px;white-space:pre;color:#000;font-weight:normal;'>net</div></div></body></html>
